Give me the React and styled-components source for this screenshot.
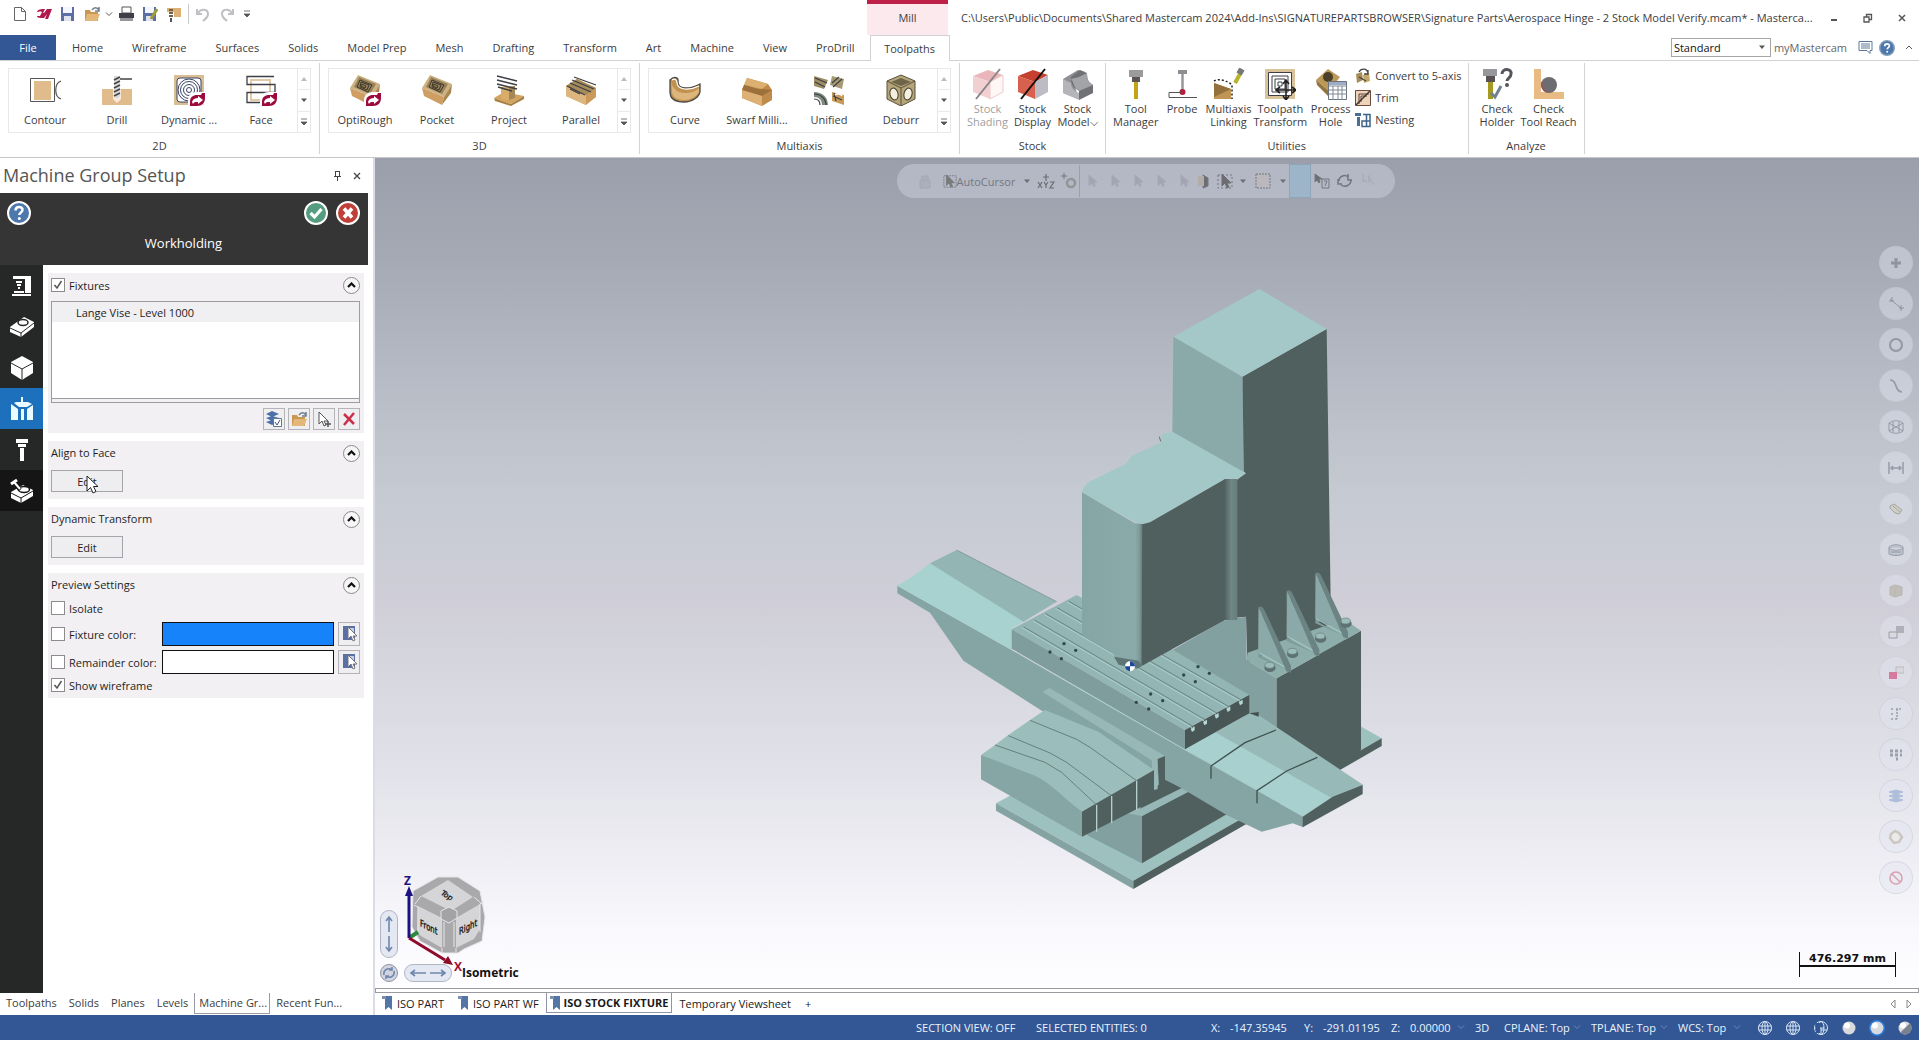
import React, { useState } from "react";
import styled, { createGlobalStyle, css } from "styled-components";

const GlobalStyle = createGlobalStyle`
  * {
    box-sizing: border-box;
  }

  body {
    margin: 0;
    font-family: "Open Sans", "Noto Sans", sans-serif;
    font-size: 11px;
    line-height: 13px;
    color: #3c3c3c;
    background: #fff;
  }

  button, input, select {
    font: inherit;
    color: inherit;
  }

  button {
    padding: 0;
    border: none;
    background: none;
    cursor: pointer;
  }

  h1, h2, h3 {
    margin: 0;
    font-weight: 400;
  }

  svg {
    display: block;
    flex: none;
  }
`;

const AppFrame = styled.div`
  display: flex;
  flex-direction: column;
  min-height: 100vh;
`;

/* ---------- title bar ---------- */

const TopBar = styled.header`
  display: flex;
  align-items: center;
  height: 35px;
`;

const QuickAccess = styled.div`
  display: flex;
  align-items: center;
  align-self: flex-start;
  width: 867px;
  height: 28px;
  padding-left: 8px;
`;

const QuickButton = styled.button`
  display: flex;
  align-items: center;
  justify-content: center;
  width: ${(props) => props.$w || 24}px;
  height: 24px;
`;

const QuickDivider = styled.span`
  width: 1px;
  height: 20px;
  margin: 0 2px;
  background: #c9c9c9;
`;

const ContextTitle = styled.div`
  align-self: stretch;
  display: flex;
  align-items: center;
  justify-content: center;
  width: 81px;
  padding-bottom: 5px;
  border-top: 4px solid #bd2148;
  background: #fce9ee;
`;

const DocTitle = styled.h1`
  flex: 1;
  min-width: 0;
  padding-left: 13px;
  font-size: 11px;
  line-height: 16px;
  white-space: nowrap;
`;

const WindowButtons = styled.div`
  display: flex;
`;

const WindowButton = styled.button`
  display: flex;
  align-items: center;
  justify-content: center;
  width: 34px;
  height: 32px;
`;

/* ---------- ribbon tabs ---------- */

const TabStrip = styled.nav`
  display: flex;
  height: 26px;
  border-bottom: 1px solid #d2d2d6;
`;

const RibbonTab = styled.button`
  height: 26px;
  margin-right: 1px;
  padding: 0 14px;
  line-height: 26px;

  ${(props) =>
    props.$kind === "file" &&
    css`
      width: 56px;
      padding: 0;
      height: 25px;
      margin-right: 2px;
      color: #fff;
      background: #335695;
    `}

  ${(props) =>
    props.$kind === "active" &&
    css`
      width: 80px;
      padding: 0;
      border: 1px solid #d2d2d6;
      border-bottom: none;
      background: #fff;
    `}
`;

const TabTools = styled.div`
  display: flex;
  align-items: center;
  margin-left: auto;
  gap: 2px;
`;

const ModeSelect = styled.select`
  width: 100px;
  height: 19px;
  padding: 0 0 0 2px;
  border: 1px solid #a6a6a6;
  border-radius: 0;
  background: #fff;
  color: #111;
  appearance: none;
`;

const SelectBox = styled.div`
  position: relative;

  svg {
    position: absolute;
    right: 5px;
    top: 7px;
    pointer-events: none;
  }
`;

const AccountLink = styled.a`
  margin: 0 6px 0 1px;
  line-height: 24px;
  color: #666;
  text-decoration: none;
`;

const TabIconButton = styled.button`
  display: flex;
  align-items: center;
  justify-content: center;
  width: 20px;
  height: 22px;
`;

/* ---------- ribbon ---------- */

const RibbonBar = styled.div`
  display: flex;
  height: 97px;
  padding-top: 2px;
  border-bottom: 1px solid #c8c8cc;
`;

const RibbonGroup = styled.section`
  display: flex;
  flex-direction: column;
  height: 91px;
  padding: 5px ${(props) => props.$pad}px 0;
  border-right: 1px solid #d4d4d8;
`;

const GroupTitle = styled.h2`
  margin-top: auto;
  padding-bottom: 1px;
  font-size: 11px;
  line-height: 14px;
  text-align: center;
`;

const GroupBody = styled.div`
  display: flex;
`;

const Gallery = styled.div`
  display: flex;
  height: 65px;
  border: 1px solid #e8e8ea;
`;

const GalleryItem = styled.button`
  display: flex;
  flex-direction: column;
  align-items: center;
  gap: 7px;
  width: 72px;
  padding-top: 5px;
  white-space: nowrap;
`;

const GalleryScroll = styled.div`
  display: flex;
  flex-direction: column;
  width: 13px;
  border-left: 1px solid #e8e8ea;
`;

const ScrollButton = styled.button`
  display: flex;
  align-items: center;
  justify-content: center;
  flex: 1;

  & + & {
    border-top: 1px solid #e8e8ea;
  }
`;

const LargeTool = styled.button`
  display: flex;
  flex-direction: column;
  align-items: center;
  gap: 2px;
  min-width: 45px;
  padding: 0 1px;
  opacity: ${(props) => (props.disabled ? 0.5 : 1)};
`;

const ToolLabel = styled.span`
  white-space: pre;
  text-align: center;
`;

const SmallTools = styled.div`
  display: flex;
  flex-direction: column;
  padding-left: 2px;
`;

const SmallTool = styled.button`
  display: flex;
  align-items: flex-start;
  gap: 4px;
  height: 22px;
  white-space: nowrap;

  span {
    line-height: 16px;
  }
`;

/* ---------- left panel ---------- */

const Workspace = styled.main`
  display: flex;
  flex: 1;
`;

const SidePanel = styled.aside`
  display: flex;
  flex-direction: column;
  width: 375px;
  border-right: 2px solid #dcdce4;
`;

const PanelHeading = styled.div`
  display: flex;
  align-items: center;
  height: 35px;
  padding: 0 7px 0 3px;

  h2 {
    flex: 1;
    padding-bottom: 1px;
    font-size: 18px;
    line-height: 24px;
    color: #555;
  }
`;

const PanelIconButton = styled.button`
  display: flex;
  align-items: center;
  justify-content: center;
  width: 19px;
  height: 20px;
`;

const PanelHeader = styled.div`
  width: 368px;
  height: 72px;
  padding: 8px 8px 0 7px;
  background: #363535;
  color: #fff;

  h3 {
    margin-top: 8px;
    font-size: 13px;
    line-height: 20px;
    text-align: center;
  }
`;

const HeaderButtons = styled.div`
  display: flex;
  gap: 8px;

  button:first-child {
    margin-right: auto;
  }
`;

const PanelBody = styled.div`
  display: flex;
  flex: 1;
`;

const PageRail = styled.nav`
  width: 43px;
  background: #262727;
`;

const RailButton = styled.button`
  display: flex;
  align-items: center;
  justify-content: center;
  width: 43px;
  height: 41px;
  background: ${(props) => props.$bg || "transparent"};
`;

const Sections = styled.div`
  display: flex;
  flex-direction: column;
  flex: 1;
  gap: 8px;
  padding: 8px 9px 0 5px;
  color: #1e1e1e;
`;

const Section = styled.section`
  padding: 3px 4px ${(props) => props.$bottom || 7}px 3px;
  background: #f2f0f2;
`;

const SectionHead = styled.div`
  display: flex;
  align-items: center;
  justify-content: space-between;
  height: 18px;

  h3 {
    font-size: 11px;
    line-height: 18px;
  }
`;

const CheckLabel = styled.label`
  display: flex;
  align-items: center;
  gap: 4px;
  white-space: nowrap;
`;

const CheckBox = styled.input`
  appearance: none;
  width: 14px;
  height: 14px;
  margin: 0;
  border: 1px solid #8c8c8c;
  background: #fff;

  &:checked {
    background: #fff
      url("data:image/svg+xml,%3Csvg xmlns='http://www.w3.org/2000/svg' viewBox='0 0 12 12'%3E%3Cpath d='M2.5 6l2.5 3 4.500-7' fill='none' stroke='%23555' stroke-width='1.500'/%3E%3C/svg%3E");
  }
`;

const CollapseButton = styled.button`
  display: flex;
  align-items: center;
  justify-content: center;
  width: 17px;
  height: 17px;
  border: 1px solid #8b8b8b;
  border-radius: 50%;
  background: #f7f6f7;
`;

const FixtureList = styled.ul`
  height: 98px;
  margin: 7px 0 0;
  padding: 0;
  list-style: none;
  border: 1px solid #9b9ba0;
  background: #fff;

  li {
    height: 20px;
    padding-left: 24px;
    line-height: 21px;
    background: #f0eff1;
  }
`;

const ListFooter = styled.div`
  height: 4px;
  border: 1px solid #9b9ba0;
  border-top: none;
`;

const ListButtons = styled.div`
  display: flex;
  justify-content: flex-end;
  gap: 3px;
  margin-top: 5px;
`;

const SquareButton = styled.button`
  display: flex;
  align-items: center;
  justify-content: center;
  width: 22px;
  height: ${(props) => props.$h || 22}px;
  border: 1px solid #b4b3b8;
  background: #efeef1;
`;

const EditButton = styled.button`
  display: block;
  width: 72px;
  height: 22px;
  margin-top: 8px;
  border: 1px solid #a4a4ab;
  background: #eeedf0;
`;

const EditArea = styled.div`
  position: relative;
`;

const Pointer = styled.svg`
  position: absolute;
  left: 35px;
  top: 5px;
`;

const SettingRow = styled.div`
  display: flex;
  align-items: center;
  height: ${(props) => props.$h || 24}px;
`;

const SettingName = styled.div`
  flex: 1;
`;

const Swatch = styled.button`
  width: 172px;
  height: 24px;
  margin-right: 4px;
  border: 1px solid #111;
  background: ${(props) => props.$color};
`;

/* ---------- viewport ---------- */

const ViewColumn = styled.div`
  display: flex;
  flex-direction: column;
  flex: 1;
  min-width: 0;
`;

const Viewport = styled.div`
  position: relative;
  flex: 1;
  overflow: hidden;
  background: linear-gradient(
    180deg,
    #9a9fab 0%,
    #a4a9b4 12%,
    #b5bac4 26%,
    #c5cad2 40%,
    #cfced8 53%,
    #dddee6 70%,
    #eeedf3 84%,
    #f9f8fc 93%,
    #fefdff 100%
  );
`;

const SelectionBar = styled.div`
  position: absolute;
  left: calc(50% - 250px);
  top: 6px;
  display: flex;
  align-items: center;
  width: 498px;
  height: 34px;
  padding-left: 16px;
  border-radius: 17px;
  background: rgba(214, 218, 230, 0.42);
  color: #5d626c;
`;

const BarButton = styled.button`
  display: flex;
  align-items: center;
  justify-content: center;
  width: ${(props) => props.$w || 23}px;
  height: 34px;
  white-space: nowrap;
  opacity: ${(props) => (props.$dim ? 0.18 : 0.75)};
  ${(props) =>
    props.$on &&
    css`
      border: 1px solid #7899ae;
      background: #8fb4cc;
      opacity: 0.6;
    `}
`;

const BarDivider = styled.span`
  width: 1px;
  height: 32px;
  background: #9a9faa;
`;

const QuickMasks = styled.div`
  position: absolute;
  right: 6px;
  top: 88px;
  display: flex;
  flex-direction: column;
  gap: 8px;
`;

const MaskButton = styled.button`
  display: flex;
  align-items: center;
  justify-content: center;
  width: 34px;
  height: 33px;
  border-radius: 50%;
  border: 1px solid rgba(190, 192, 205, 0.4);
  background: rgba(226, 229, 240, 0.45);
  color: #777d88;

  svg {
    opacity: 0.65;
  }
`;

const ModelDrawing = styled.svg`
  position: absolute;
  left: calc(50% - 267px);
  top: 112px;
`;

const Gizmo = styled.div`
  position: absolute;
  left: 3px;
  bottom: 1px;
`;

const ScaleMark = styled.div`
  position: absolute;
  right: 23px;
  bottom: 11px;
  width: 97px;
  height: 25px;
  border: solid #111;
  border-width: 0 1px;
  font: 700 11px/13px "DejaVu Sans", sans-serif;
  color: #111;
  text-align: center;

  span {
    display: block;
    border-bottom: 2px solid #111;
  }
`;

const SplitBar = styled.div`
  height: 5px;
  border: 1px solid #9a9aa0;
  background: #fff;
`;

/* ---------- bottom tabs and status ---------- */

const BottomTabs = styled.div`
  display: flex;
  height: 22px;
`;

const ManagerTab = styled.button`
  height: 20px;
  padding: 0 6px;
  line-height: 20px;
  white-space: nowrap;
  ${(props) =>
    props.$active &&
    css`
      height: 21px;
      width: 76px;
      padding: 0 4px;
      line-height: 18px;
      border: 1px solid #9b9ba5;
      border-top: none;
    `}
`;

const SheetTab = styled.button`
  display: flex;
  align-items: center;
  gap: 5px;
  height: 20px;
  padding: 0 7px;
  white-space: nowrap;
  color: #1a1a1a;
  ${(props) =>
    props.$active &&
    css`
      gap: 4px;
      padding: 0 3px;
      border: 1px solid #8f93a3;
      border-top: none;
      font-weight: 700;
    `}
`;

const SheetArrows = styled.div`
  display: flex;
  gap: 10px;
  align-items: center;
  margin-left: auto;
  padding-right: 7px;
`;

const StatusBar = styled.footer`
  display: flex;
  align-items: center;
  justify-content: flex-end;
  height: 25px;
  background: #335795;
  color: #eaf3ff;
`;

const StatusCell = styled.div`
  display: flex;
  width: ${(props) => props.$w}px;
  white-space: nowrap;

  b {
    width: 19px;
    font-weight: 400;
  }

  svg {
    margin: 4px 10px 0 auto;
  }
`;

const StatusButton = styled.button`
  display: flex;
  justify-content: center;
  width: 28px;
`;

/* ---------- icons ---------- */

const tan = "#e0bb8b";
const ink = "#3d3f45";

const DropGlyph = ({ color = "#555", open }) => (
  <svg width="8" height="5" viewBox="0 0 8 5">
    {open ? (
      <path d="M1 0.5l3 3 3-3" fill="none" stroke={color} />
    ) : (
      <path d="M1 0.5h6L4 4z" fill={color} />
    )}
  </svg>
);

const Swoosh = () => (
  <g>
    <path d="M15 33v-7c0-5 4-8 9-8h8v8c0 4-3 7-7 7z" fill="#fff" />
    <path d="M17 32v-4c0-5 3-7 7-7h4l1-2h3v5c0 5-3 8-8 8z" fill="#9c0b3c" />
    <path d="M19 28c1-3 3-4 6-4v-2l5 4-5 4v-2c-3 0-4 0-5 2z" fill="#fff" />
  </g>
);

const ContourIcon = () => (
  <svg width="32" height="32" viewBox="0 0 32 32">
    <path d="M5 7h17v19H5z" fill={tan} />
    <path d="M1.500 4.500h24v23h-24z" fill="none" stroke="#555" />
    <path d="M32 7c-7 2-7 16 0 18" fill="none" stroke="#555" strokeWidth="1.200" />
  </svg>
);

const DrillIcon = () => (
  <svg width="32" height="32" viewBox="0 0 32 32">
    <path d="M1 15h30v16H1z" fill={tan} />
    <path d="M12 15h8v10l-4 4-4-4z" fill="#fbeadb" />
    <path d="M13 2h6v20l-3 3-3-3z" fill="#d7d9dc" />
    <path d="M13 6l6-3M13 10l6-3M13 14l6-3M13 18l6-3M13 22l6-3M19 5h12" stroke="#444" strokeWidth="1.600" />
  </svg>
);

const DynamicIcon = () => (
  <svg width="32" height="32" viewBox="0 0 32 32">
    <path d="M1 1h30v30H1z" fill="#d9bd93" />
    <rect x="4" y="4" width="24" height="24" rx="3" fill="#fff" stroke="#3a4468" />
    <g fill="none" stroke="#3a4468">
      <circle cx="16" cy="16" r="2.500" />
      <circle cx="16" cy="16" r="5.500" />
      <circle cx="16" cy="16" r="8.500" />
      <circle cx="16" cy="16" r="11" />
    </g>
    <Swoosh />
  </svg>
);

const FaceIcon = () => (
  <svg width="32" height="32" viewBox="0 0 32 32">
    <path d="M6 6h19v20H6z" fill="none" stroke="#e3c9a6" strokeWidth="2" />
    <path d="M29 2.500H2v8h28v8H2v10h14" fill="none" stroke={ink} strokeWidth="1.300" />
    <Swoosh />
  </svg>
);

const RoughIcon = ({ swoosh }) => (
  <svg width="32" height="32" viewBox="0 0 32 32">
    <path d="M9 1l22 9-8 13L1 14z" fill="#cdb182" />
    <path d="M1 14l22 9-2 8L3 22z" fill="#cf9e63" />
    <path d="M31 10l-8 13-2 8 9-12z" fill="#a98850" />
    <path d="M10 3l17 7-6 10-16-7z" fill="#96815a" />
    <path d="M11 6l12 5-4 7-11-5zM12 8l8 3-2 5-7-3zM13 10l4 2-1 2-4-2z" fill="none" stroke="#3f3828" />
    {swoosh && <Swoosh />}
  </svg>
);

const ProjectIcon = () => (
  <svg width="32" height="32" viewBox="0 0 32 32">
    <path d="M1 24l10-6 20 4-13 8z" fill="#d3a45f" />
    <path d="M1 24l17 6v2L2 27zM18 30l13-8v3l-13 7z" fill="#a98044" />
    <path d="M8 13l14-1v12c-4 3-10 3-14 0z" fill="#d9ae6b" />
    <path d="M16 13l6-1v12l-6 2z" fill="#a48856" />
    <path d="M4 2l20 5M4 6l20 5M4 10l20 5M5 13l14 4" stroke={ink} strokeWidth="1.400" />
  </svg>
);

const ParallelIcon = () => (
  <svg width="32" height="32" viewBox="0 0 32 32">
    <path d="M1 12L12 5l19 9v9l-10 8L1 22z" fill="#cb9a58" />
    <path d="M1 12l20 9v10L1 22z" fill="#dcb67e" />
    <path d="M1 12L12 5l19 9-10 7z" fill="#a68b5b" />
    <path d="M9 3l22 8M7 6l22 9M5 9l21 9M2 12l18 9M5 15l10 5" stroke={ink} strokeWidth="1.300" />
  </svg>
);

const CurveIcon = () => (
  <svg width="32" height="32" viewBox="0 0 32 32">
    <path d="M1 6c4-4 9-3 8 2 0 7 10 8 22 2v7c0 6-8 11-16 11S1 25 1 18z" fill="#c0914f" />
    <path d="M2 7c1 8 7 12 14 12 6 0 11-2 14-5v4c-3 5-9 8-15 8S3 23 3 18z" fill="#dcb67c" />
    <path d="M1 6c4-4 9-3 8 2 0 7 10 8 22 2v7c0 6-8 11-16 11S1 25 1 18z" fill="none" stroke="#4a4a48" strokeWidth="1.300" />
    <path d="M3 6c3-2 5 0 5 3 1 7 12 8 22 3" fill="none" stroke="#fff" strokeWidth="1.200" />
  </svg>
);

const SwarfIcon = () => (
  <svg width="32" height="32" viewBox="0 0 32 32">
    <path d="M6 4l21 6 4 6v10l-10 6L1 24V16z" fill="#c08b4a" />
    <path d="M6 4l21 6-6 5-18-4z" fill="#dcb071" />
    <path d="M3 11c7 1 13 5 18 4l10 1-10 6L1 16z" fill="#9c703b" />
    <path d="M1 16l20 6v10L1 24z" fill="#ddb176" />
  </svg>
);

const UnifiedIcon = () => (
  <svg width="32" height="32" viewBox="0 0 32 32">
    <path d="M1 2l14 4-4 9L1 12z" fill="#9c8d64" />
    <path d="M19 2l12 3-2 10-12-4z" fill="#a69a72" />
    <path d="M1 18c8 0 14 5 14 13H9c0-5-3-8-8-8z" fill="#7f8a7e" />
    <path d="M19 18l12 3v10l-12-4z" fill="#c99b59" />
    <path d="M2 4l12 5M2 8l10 5M20 13l9-8M19 9l7-6M1 20c7 0 12 5 12 11M1 25c4 0 6 2 6 6M20 22l9 4M21 19l2 8" fill="none" stroke={ink} strokeWidth="1.200" />
    <path d="M22 21c2-2 6-1 7 1" fill="none" stroke="#fff" strokeWidth="1.500" />
  </svg>
);

const DeburrIcon = () => (
  <svg width="32" height="32" viewBox="0 0 32 32">
    <path d="M16 1l14 6v18l-14 7L2 25V7z" fill="#b5a67a" stroke="#58513d" />
    <path d="M16 4l10 4-10 4L6 8z" fill="#6f664a" />
    <path d="M2 7l14 7 14-7M16 14v18" fill="none" stroke="#58513d" />
    <ellipse cx="9" cy="20" rx="4" ry="6" fill="#f5efe0" stroke="#403b2c" transform="rotate(-15 9 20)" />
    <ellipse cx="23" cy="20" rx="4" ry="6" fill="#f5efe0" stroke="#403b2c" transform="rotate(15 23 20)" />
  </svg>
);

const StockCubeIcon = ({ ghost }) => (
  <svg width="32" height="32" viewBox="0 0 32 32">
    <path d="M1 8L16 2l15 5-13 7z" fill={ghost ? "#d9707a" : "#c5402f"} />
    <path d="M1 8l17 6v17L1 24z" fill={ghost ? "#e7a1a5" : "#d8604e"} />
    <path d="M31 7L18 14v17l13-7z" fill={ghost ? "#fff0ec" : "#bdbcc4"} stroke={ghost ? "#df9a98" : "none"} />
    <path d="M28 1L4 31" stroke="#111" strokeWidth="2" />
  </svg>
);

const StockModelIcon = () => (
  <svg width="32" height="32" viewBox="0 0 32 32">
    <path d="M1 11L16 2l7 2-12 9 3 9 3 9L1 25z" fill="#8f9093" />
    <path d="M9 9l9-7 7 3c0 8 2 9 6 12v8l-14 7v-9c-6-4-8-6-8-14z" fill="#707174" />
    <path d="M17 9l8-4c0 8 2 9 6 12l-14 6c-6-4-5-9-8-12z" fill="#a3a4a8" />
    <path d="M1 11l8 4c0 6 4 8 8 10v7L1 25z" fill="#b5b5b9" />
  </svg>
);

const ToolManagerIcon = () => (
  <svg width="32" height="32" viewBox="0 0 32 32">
    <path d="M9 2h14v7H9z" fill="#9b9b9e" />
    <path d="M12 9h8v5h-8z" fill="#5c5453" />
    <path d="M14 14h4v17h-4z" fill="#c2a416" />
  </svg>
);

const ProbeIcon = () => (
  <svg width="32" height="32" viewBox="0 0 32 32">
    <path d="M12 2h9v4h-9z" fill="#8d8d92" />
    <path d="M16.500 6v16" stroke="#96969b" strokeWidth="2.500" />
    <circle cx="16.500" cy="24" r="3" fill="#b0213f" />
    <path d="M15 24.500H3v5h28" fill="none" stroke="#555" />
  </svg>
);

const LinkingIcon = () => (
  <svg width="32" height="32" viewBox="0 0 32 32">
    <path d="M1 15l17 6v10H1z" fill="#bf9455" />
    <path d="M1 15l17 6-17 8z" fill="#94703c" />
    <path d="M1 13c5-3 14 0 18 4v14" fill="none" stroke="#222" strokeDasharray="2 2" strokeWidth="1.500" />
    <path d="M22 15l5-9" stroke="#b9b427" strokeWidth="4" />
    <path d="M26 6l3-5" stroke="#777" strokeWidth="6" />
  </svg>
);

const TransformIcon = () => (
  <svg width="32" height="32" viewBox="0 0 32 32">
    <path d="M1 1h30v30H1z" fill="#d9c39d" />
    <path d="M4.500 4.500h23v23h-23z" fill="#fff" stroke={ink} />
    <path d="M8 8h16v16H8zM11 11h10v10H11zM14 14h4v4h-4z" fill="none" stroke={ink} />
    <path d="M22 13v18M13 22h18M19 16l3-4 3 4M19 28l3 4 3-4M16 19l-4 3 4 3M28 19l4 3-4 3" fill="none" stroke="#222" strokeWidth="1.600" />
  </svg>
);

const ProcessHoleIcon = () => (
  <svg width="32" height="32" viewBox="0 0 32 32">
    <path d="M13 1l12 8-11 14L1 12z" fill="#bd9959" />
    <path d="M1 12l13 11-1 5L2 17z" fill="#93743e" />
    <circle cx="13" cy="9" r="5" fill="#4c3f27" />
    <path d="M13.500 13.500h18v18h-18z" fill="#fff" stroke="#69737f" />
    <path d="M14 18h18M14 22h18M14 26h18M18 18v14M23 18v14M27 18v14" stroke="#7f8995" />
    <path d="M14 14h17v3H14z" fill="#9faec4" />
  </svg>
);

const HolderIcon = () => (
  <svg width="32" height="32" viewBox="0 0 32 32">
    <path d="M2 1h14v7H2z" fill="#98989c" />
    <path d="M5 8h9v6H5z" fill="#5a5252" />
    <path d="M7 14h5v17H7z" fill="#a59a1f" />
    <path d="M10 25l4 4 6-11" fill="none" stroke="#6f8490" strokeWidth="3" />
    <path d="M21 6c0-6 10-6 9 0 0 4-4 4-4 7" fill="none" stroke="#55575d" strokeWidth="3" />
    <circle cx="26" cy="17" r="2" fill="#55575d" />
  </svg>
);

const ReachIcon = () => (
  <svg width="32" height="32" viewBox="0 0 32 32">
    <path d="M1 1h7v23h23v7H1z" fill="#e8bb84" />
    <circle cx="16" cy="17" r="8" fill="#6d6c70" />
    <path d="M9 14a8 8 0 0 0 5 10" fill="none" stroke="#a04d4d" strokeWidth="1.200" />
  </svg>
);

const FiveAxisIcon = () => (
  <svg width="16" height="16" viewBox="0 0 16 16">
    <path d="M1 6l6-2 1 8-6 3z" fill="#a58d57" />
    <path d="M8 7l6-2 1 8-6 2z" fill="#c3a767" />
    <path d="M4 4c2-4 8-4 9 1M13 2v4H9M4 9l7 4" fill="none" stroke="#444" strokeWidth="1.300" />
  </svg>
);

const TrimIcon = () => (
  <svg width="16" height="16" viewBox="0 0 16 16">
    <path d="M0.500 0.500h15v15h-15z" fill="#ecd3ba" stroke="#6e4b3d" />
    <path d="M4 14V4h10M6 12V6h6" fill="none" stroke="#5c4438" />
    <path d="M1 15L15 1" stroke="#3d3532" strokeWidth="1.500" />
  </svg>
);

const NestingIcon = () => (
  <svg width="16" height="16" viewBox="0 0 16 16">
    <path d="M0 1h6v3H0zM2 5h3v9H2z" fill="#4a6f94" />
    <path d="M8 2.500h7v12H7V9h8M11.500 2.500v12" fill="none" stroke="#3f648a" strokeWidth="1.500" />
  </svg>
);

const HelpIcon = ({ size = 24 }) => (
  <svg width={size} height={size} viewBox="0 0 24 24">
    <circle cx="12" cy="12" r="11" fill="#4d78ad" stroke={size > 20 ? "#fff" : "#8aa0bb"} strokeWidth="2" />
    <path d="M8.500 9.500c0-5 7.500-4.500 7-.5-.2 2.500-3.200 2.500-3.200 5" fill="none" stroke="#fff" strokeWidth="2.500" />
    <circle cx="12.300" cy="17.500" r="1.500" fill="#fff" />
  </svg>
);

const OkIcon = () => (
  <svg width="24" height="24" viewBox="0 0 24 24">
    <circle cx="12" cy="12" r="11" fill="#559c80" stroke="#fff" strokeWidth="2" />
    <path d="M6.500 12l4 4 7-8" fill="none" stroke="#fff" strokeWidth="3.200" />
  </svg>
);

const CancelIcon = () => (
  <svg width="24" height="24" viewBox="0 0 24 24">
    <circle cx="12" cy="12" r="11" fill="#bf4038" stroke="#fff" strokeWidth="2" />
    <path d="M8 7.500l8 9M16 7.500l-8 9" stroke="#fff" strokeWidth="3.600" />
  </svg>
);

const CollapseGlyph = () => (
  <svg width="9" height="7" viewBox="0 0 9 7">
    <path d="M1 5l3.500-3.500L8 5" fill="none" stroke="#111" strokeWidth="2.200" />
  </svg>
);

const BookmarkIcon = () => (
  <svg width="10" height="16" viewBox="0 0 10 16">
    <path d="M0 1h10v14l-3.500-3L3 15V4H0z" fill="#5476a6" />
    <path d="M0 1h4v3H0z" fill="#7c90ad" />
  </svg>
);

const CursorShape = ({ x = 0, y = 0, fill = "#fff", stroke = "#444" }) => (
  <path d={`M${x} ${y}v12l3-3 2 5 2-1-2-4h4z`} fill={fill} stroke={stroke} />
);

const NewIcon = () => (
  <svg width="14" height="16" viewBox="0 0 14 16">
    <path d="M1.500 1.500h7l4 4v9h-11zM8.500 1.500v4h4" fill="#fff" stroke="#666" />
  </svg>
);

const BrandIcon = () => (
  <svg width="17" height="14" viewBox="0 0 17 14">
    <path d="M1 5c1-3 4-3 8-3L7 6h1l3-4h5l-4 10H9l2-5-3 4H5c-3 0-4-1-4-2h3l2-4c-2-1-3 0-5 0z" fill="#b0194a" />
  </svg>
);

const SaveIcon = ({ edit }) => (
  <svg width="16" height="16" viewBox="0 0 16 16">
    <path d="M1 1h13v14H1z" fill="#5b6fa5" />
    <path d="M3 1h9v6H3z" fill="#f4f6fb" />
    <path d="M4 10h7v5H4z" fill="#dfe3ee" />
    {edit && <path d="M15 3l-6 10" stroke="#a39a37" strokeWidth="3" />}
  </svg>
);

const OpenIcon = () => (
  <svg width="17" height="16" viewBox="0 0 17 16">
    <path d="M1 4h5l1 2h7v9H1z" fill="#c99850" />
    <path d="M3 8h13l-3 7H1z" fill="#e3b777" />
    <path d="M8 4c2-3 5-3 7 0M15 1v4h-4" fill="none" stroke="#6d7d8d" strokeWidth="1.500" />
  </svg>
);

const PrintIcon = () => (
  <svg width="17" height="16" viewBox="0 0 17 16">
    <path d="M4 1h9v6H4z" fill="#fff" stroke="#555" />
    <path d="M1 7h15v5H1z" fill="#3e4046" />
    <path d="M2 12h13v3H2z" fill="#95979c" />
  </svg>
);

const PostIcon = () => (
  <svg width="16" height="16" viewBox="0 0 16 16">
    <path d="M1 2h14v9H8V6H1z" fill="#ddb173" />
    <path d="M5 3v9" stroke="#6c6250" strokeWidth="4" strokeDasharray="2 1" />
    <path d="M5 12v4" stroke="#555" strokeWidth="2" />
  </svg>
);

const UndoIcon = ({ flip }) => (
  <svg width="14" height="15" viewBox="0 0 14 15">
    <g transform={flip ? "matrix(-1 0 0 1 14 0)" : undefined} fill="none" stroke="#bfc0c6" strokeWidth="2">
      <path d="M2 6c3-5 10-4 10 1 0 4-3 5-5 7M1 2v5h5" />
    </g>
  </svg>
);

const OverflowGlyph = ({ color = "#555" }) => (
  <svg width="8" height="8" viewBox="0 0 8 8">
    <path d="M1 1h6M1 4h6L4 7z" fill={color} stroke={color} strokeWidth="0.800" />
  </svg>
);

/* white pictograms of the setup page rail */

const MachinePageIcon = () => (
  <svg width="24" height="24" viewBox="0 0 24 24" fill="#fff">
    <path d="M3 2h18v3H3zM15 5h6v14h-6zM4 17h10v2H4zM2 20h19v2H2z" />
    <path d="M6 7h6v2H6zM7 10h4v2H7zM8 13h2v2H8z" />
  </svg>
);

const PartPageIcon = () => (
  <svg width="26" height="24" viewBox="0 0 26 24">
    <path d="M1 12L15 2l10 5v5L12 22 1 17z" fill="#fff" />
    <path d="M1 13l11 5L25 8M12 18v4" fill="none" stroke="#262727" />
    <ellipse cx="14" cy="7.500" rx="5" ry="3" fill="#fff" stroke="#262727" strokeWidth="1.500" />
  </svg>
);

const StockPageIcon = () => (
  <svg width="24" height="26" viewBox="0 0 24 26">
    <path d="M12 1l11 6v11l-11 7-11-7V7z" fill="#fff" />
    <path d="M1 8l11 6 11-6M12 14v11" fill="none" stroke="#262727" />
  </svg>
);

const FixturePageIcon = () => (
  <svg width="26" height="26" viewBox="0 0 26 26" fill="#e9fbff">
    <path d="M2 8l7 5v11H2zM24 9v15h-6V13z" />
    <path d="M7 6h12l4 2-5 3h-8L5 7zM12 1h2v6h-2zM12 13h3v11h-3z" />
  </svg>
);

const ToolPageIcon = () => (
  <svg width="20" height="24" viewBox="0 0 20 24" fill="#fff">
    <path d="M4 1h12v4H4zM6 6h8v3H6zM8 10h4v13H8z" />
  </svg>
);

const SimPageIcon = () => (
  <svg width="26" height="26" viewBox="0 0 26 26">
    <path d="M2 14l12-7 10 5v6l-12 7-10-5z" fill="#fff" />
    <path d="M2 15l10 5 12-7M12 20v5" fill="none" stroke="#151515" />
    <ellipse cx="15" cy="11.500" rx="5.500" ry="3" fill="#fff" stroke="#151515" strokeWidth="1.500" />
    <path d="M5 4l6 8" stroke="#151515" strokeWidth="4" />
    <path d="M5 4l6 7" stroke="#fff" strokeWidth="2" />
    <path d="M2 6l6-4" stroke="#fff" strokeWidth="3" />
  </svg>
);

const PickIcon = () => (
  <svg width="16" height="18" viewBox="0 0 16 18">
    <path d="M2 1h12v14H2z" fill="#5a6fa5" />
    <path d="M9 3h4v8H9z" fill="#c5cde0" />
    <CursorShape x={7} y={2} stroke="#777" />
  </svg>
);

const galleries = [
  {
    title: "2D",
    items: [
      ["Contour", <ContourIcon />],
      ["Drill", <DrillIcon />],
      ["Dynamic ...", <DynamicIcon />],
      ["Face", <FaceIcon />],
    ],
  },
  {
    title: "3D",
    items: [
      ["OptiRough", <RoughIcon swoosh />],
      ["Pocket", <RoughIcon />],
      ["Project", <ProjectIcon />],
      ["Parallel", <ParallelIcon />],
    ],
  },
  {
    title: "Multiaxis",
    items: [
      ["Curve", <CurveIcon />],
      ["Swarf Milli...", <SwarfIcon />],
      ["Unified", <UnifiedIcon />],
      ["Deburr", <DeburrIcon />],
    ],
  },
];

const menuTabs = [
  "Home", "Wireframe", "Surfaces", "Solids", "Model Prep", "Mesh", "Drafting",
  "Transform", "Art", "Machine", "View", "ProDrill",
];

const maskIcons = [
  <path d="M8 3v10M3 8h10" strokeWidth="3" />,
  <path d="M2 3l12 10M1 5h5M4 1v5M11 12h5M13 9v6" />,
  <circle cx="8" cy="8" r="6" strokeWidth="2" />,
  <path d="M2 2c8 0 4 12 12 12" strokeWidth="1.600" />,
  <path d="M1 4c4-3 10-3 14 0v8c-4 3-10 3-14 0zM1 4l14 8M1 12l14-8M5 3v10M11 3v10" />,
  <path d="M1 2v12M15 2v12M3 8h10M5 6L3 8l2 2M11 6l2 2-2 2" strokeWidth="1.500" />,
  <path d="M2 5l4-2 8 6-3 4-4-1-5-5zM5 5l7 6" stroke="#8c897c" fill="#cfcdbb" />,
  <path d="M1 5c4-3 10-3 14 0v7c-4 2-10 2-14 0zM1 6c4 3 10 3 14 0M3 10h10" fill="#b6bac6" />,
  <path d="M2 4l5-2 7 2v8l-7 2-5-2zM7 5v9" fill="#b5b0a2" stroke="#aba698" />,
  <g><path d="M8 2h8v7H8z" fill="#9a9ba5" stroke="none" /><path d="M1 8h8v6H1z" fill="#ded7d9" /></g>,
  <g><path d="M8 2h8v6H8z" fill="#d9d5d9" stroke="#aaa" /><path d="M1 7h8v7H1z" fill="#d4467a" stroke="none" /></g>,
  <path d="M3 3h3M3 8h3M3 13h3M8 3h5M9 3v10M7 13h2" strokeWidth="1.500" strokeDasharray="2 1" />,
  <path d="M2 4h12M2 8h12M8 12h2" strokeWidth="3" strokeDasharray="3 2" />,
  <path d="M1 4l7-2 7 2-7 2zM1 8l7-2 7 2-7 2zM1 12l7-2 7 2-7 2z" fill="#92a8cf" stroke="#92a8cf" />,
  <path d="M3 5l4-3 4 2 3 4-3 5-5 1-4-5z" fill="#efece6" stroke="#bdb5aa" strokeWidth="2.500" />,
  <g stroke="#cf7d8c" strokeWidth="1.600"><circle cx="8" cy="8" r="6" /><path d="M4 4l8 8" /></g>,
];

const Gusset = ({ x, y }) => (
  <g transform={`translate(${x} ${y})`}>
    <path d="M0 0l12 8v140l74 40-12 -6L0 150z" fill="#7d9a99" />
    <path d="M2 2L82 176 0 134z" fill="#8aa9a8" />
    <path d="M0 0c8-6 14 0 18 8l80 168v20l-14-4L8 14z" fill="#6b8382" />
    <path d="M2 136l76 42" stroke="#a9cccb" strokeWidth="3" />
  </g>
);

const MachineModel = () => (
  <ModelDrawing width="520" height="640" viewBox="0 0 1560 1920" role="img" aria-label="Machine model">
    <defs>
      <linearGradient id="headSide">
        <stop offset="0" stopColor="#86a6a5" />
        <stop offset="0.850" stopColor="#8aaaa9" />
        <stop offset="0.920" stopColor="#7e9b9a" />
        <stop offset="1" stopColor="#536564" />
      </linearGradient>
      <linearGradient id="groove">
        <stop offset="0" stopColor="#536463" />
        <stop offset="0.500" stopColor="#6f8785" />
        <stop offset="1" stopColor="#677e7c" />
      </linearGradient>
    </defs>

    {/* base plate and pedestal */}
    <g transform="translate(0 810)">
      <path d="M348 790L400 762 1440 558l65 37-745 427z" fill="#9dc1bf" />
      <path d="M348 790l412 232v25L348 812z" fill="#84a3a2" />
      <path d="M760 1022l745-427v23l-745 429z" fill="#50605f" />
      <path d="M600 700l186 125v145L616 878z" fill="#81a09f" />
      <path d="M620 885l166 85-10-140-120 25z" fill="#81a09f" />
      <path d="M786 828l140-75 240 70-126 0-254 147z" fill="#50605f" />
      <path d="M740 820l170-88 26 18-150 78z" fill="#96b7b5" />
      <path d="M780 806l40-60 40-30 50 26z" fill="#50605f" />
    </g>

    {/* column */}
    <path d="M1087 320l253-143 12 820 60 150-310 30-4-137-40 4V640l39-30-10-10z" fill="#50605f" />
    <path d="M880 200L1138 57l202 120-253 143z" fill="#a3c8c7" />
    <path d="M880 200l207 120 5 290-215-123z" fill="#8aaaa9" />

    {/* column foot */}
    <g transform="translate(0 810)">
      <path d="M860 340l170-98 68-12 2 130 90 55v160L1000 480z" fill="#82a09f" />
      <path d="M1190 415l253-143v358l-63 58-190-110z" fill="#50605f" />
      <path d="M1100 360l90 55 253-143-50-34-290 100z" fill="#8eaeac" />
      <Gusset x={1306} y={100} />
      <Gusset x={1220} y={153} />
      <Gusset x={1135} y={202} />
      {[[1170, 380], [1238, 338], [1322, 292], [1398, 247]].map(([x, y]) => (
        <g key={x}>
          <ellipse cx={x} cy={y + 4} rx="17" ry="12" fill="#5d7271" />
          <ellipse cx={x - 1} cy={y - 4} rx="14" ry="9" fill="#9bbcba" stroke="#667d7c" strokeWidth="2" />
        </g>
      ))}
    </g>

    {/* saddle, table and way covers */}
    <g transform="translate(0 810)">
      <path d="M52 137l343 193 520 300 355 200v32l-32-12-93 25-105-50-135-80-50-25-80-60-285-145-240-153-100-144-98-58z" fill="#85a5a4" />
      <path d="M52 137l43-25 55-42 300 165-55 30v65z" fill="#a8d2d0" />
      <path d="M150 70l80-40 135 70 165 85-100 60z" fill="#93b5b4" />
      <path d="M230 30l135 70 165 85" fill="none" stroke="#718a8a" strokeWidth="2" />
      <path d="M52 137l343 193v-8L52 133zM395 330l520 300 355 200v-6L915 624z" fill="#a9d1cf" />
      <path d="M915 628l193-108 27 5 315 210-180 95z" fill="#97b9b7" />
      <path d="M915 628l85-54 370 208-100 48z" fill="#a7d0ce" />
      <path d="M1268 830l90-60 90-35v27l-180 100z" fill="#50605f" />
      <path d="M993 716v-38l102-70 93-38M1131 790v-38l89-59 92-41" fill="none" stroke="#3f5150" strokeWidth="4" />
      <path d="M1108 520l28-4v14z" fill="#425150" />

      <path d="M395 268l195-103 290 165 228 135-193 105z" fill="#93b5b4" />
      <path d="M395 268l520 302v58L395 326z" fill="#7f9d9c" />
      <path d="M915 570l193-105v55l-193 108z" fill="#485756" />
      {[[430, 260, 940, 560], [463, 240, 977, 540], [497, 221, 1012, 520], [531, 203, 1047, 500], [565, 183, 1084, 480]].map(
        ([x1, y1, x2, y2]) => (
          <g key={x1}>
            <path d={`M${x1} ${y1}L${x2} ${y2}`} stroke="#6b8584" strokeWidth="3" />
            <path d={`M${x1 - 4} ${y1 + 3}L${x2 - 4} ${y2 + 3}`} stroke="#abd0ce" strokeWidth="3" />
            <path d={`M${x2 - 8} ${y2 + 6}l12-7v12l-8 5z`} fill="#b6d5d4" />
          </g>
        )
      )}
      {[[552, 311], [587, 331], [510, 336], [544, 356], [954, 380], [988, 400], [911, 405], [946, 425], [812, 462], [848, 482], [769, 487], [806, 507]].map(
        ([x, y]) => (
          <circle key={x} cx={x} cy={y} r="5" fill="#33484d" />
        )
      )}

      <path d="M488 456l20-12 347 204-22 9v98l-14-8-4-86z" fill="#97b8b7" />
      <path d="M833 657l22-9v84l-18 23z" fill="#4f605f" />
      <path d="M855 720l40 20-30 20-30 0z" fill="#50605f" />

      <path d="M303 645l42-30 40-30 65-45 45-30 160 65 167 115-216 125-140-90z" fill="#9bbebc" />
      <path d="M303 645l157 60c50 20 90 70 146 110v75L303 718z" fill="#86a6a5" />
      <path d="M606 815l216-125v60l60-14-50 40-226 114z" fill="#50605f" />
      <path d="M345 615l150 52 50 30 105 98M385 587l125 52 50 28 135 101M450 541l140 57 40 24 140 100" fill="none" stroke="#687f7e" strokeWidth="3" />
      <path d="M650 795v80M695 768v82M770 722v88" stroke="#b5cfcd" strokeWidth="4" />
    </g>

    {/* spindle head */}
    <path d="M606 667c4-18 16-30 34-38l98-48 16-22 88-42 4-26 34-4 218 123-26 17h-37L810 757c-14 8-30 8-45 0z" fill="#a3c8c7" />
    <path d="M606 667l159 93 28 3v420l-30 5-43-5-20-32-94-56z" fill="url(#headSide)" />
    <path d="M787 763l23-6 225-130v423l-250 138z" fill="#50605f" />
    <path d="M1035 627h37v423h-37z" fill="url(#groove)" />
    <path d="M702 1160l14 24 56 12 14-8-10-16z" fill="#5d7675" />
    <circle cx="750" cy="1189" r="15" fill="#fff" />
    <path d="M750 1189v-15a15 15 0 0 1 15 15zM750 1189v15a15 15 0 0 1-15-15z" fill="#1d479b" />
    <path d="M838 500l4 14" stroke="#60706f" strokeWidth="3" />
  </ModelDrawing>
);

const ViewGizmo = () => (
  <Gizmo>
    <svg width="150" height="116" viewBox="378 871 150 116" role="img" aria-label="View orientation">
      <path d="M438 877l20 0 22 14 5 26-3 24-18 8-6 4h-16l-22-12-8-14 1-36z" fill="#a9a9ab" stroke="#e6e6ea" />
      <path d="M448 880l25 17-22 14-30-15z" fill="#d5d5d7" />
      <path d="M418 906l24 12v30l-21-12-4-4z" fill="#d5d5d7" />
      <path d="M456 918l24-14v25l-6 10-18 9z" fill="#d5d5d7" />
      <path d="M441 911l8-4 8 4v7l-8 5-8-4z" fill="#a3a3a5" stroke="#e6e6ea" />
      <path d="M414 905l4 2v27M484 902l-4 2v28M421 896l-6 8M474 897l8 7M442 948v5M456 948v4M444 922v25M454 922v25" fill="none" stroke="#e6e6ea" />
      <g fontFamily="DejaVu Sans, sans-serif" fontSize="8" fill="#111" stroke="#111" strokeWidth="0.300">
        <text transform="matrix(0.800 0.500 -0.600 0.700 440 894)">Top</text>
        <text transform="matrix(0.860 0.440 0 1.200 420 926)">Front</text>
        <text transform="matrix(0.860 -0.440 0 1.200 459 935)">Right</text>
      </g>
      <path d="M409 938l9-6" stroke="#2c8a3c" strokeWidth="4" />
      <path d="M409 938v-44" stroke="#1c1280" strokeWidth="3" />
      <path d="M409 886l-4 10h8z" fill="#1c1280" />
      <path d="M409 938l36 22" stroke="#8e0b2b" strokeWidth="3" />
      <path d="M453 965l-10-2 5-7z" fill="#8e0b2b" />
      <g fontFamily="Open Sans, sans-serif" fontWeight="700" fontSize="12">
        <text x="404" y="885" fill="#1c1280">Z</text>
        <text x="454" y="971" fill="#a30d33">X</text>
        <text x="462" y="977" fill="#111">Isometric</text>
      </g>
      <g fill="#e4e8f3" stroke="#b0b5c4">
        <rect x="380.500" y="910.500" width="17" height="47" rx="8.500" />
        <rect x="404.500" y="964.500" width="47" height="17" rx="8.500" />
        <circle cx="389" cy="973" r="8.500" fill="#d2d5e0" stroke="#8e93a3" />
      </g>
      <g fill="none" stroke="#6f86ab" strokeWidth="1.600">
        <path d="M389 932v-14M386 921l3-4 3 4M389 936v14M386 947l3 4 3-4" />
        <path d="M426 973h-14M415 970l-4 3 4 3M430 973h14M441 970l4 3-4 3" />
        <path d="M384 975c-1-5 4-8 8-5M394 971c1 5-4 8-8 5M392 967v3h-3M386 979v-3h3" />
      </g>
    </svg>
  </Gizmo>
);

const Collapse = ({ name }) => (
  <CollapseButton aria-label={`Collapse ${name}`}>
    <CollapseGlyph />
  </CollapseButton>
);

const ColorRow = ({ label, color }) => (
  <SettingRow>
    <SettingName>
      <CheckLabel>
        <CheckBox type="checkbox" />
        {label}
      </CheckLabel>
    </SettingName>
    <Swatch $color={color} aria-label={label} />
    <SquareButton $h={24} aria-label="Pick color">
      <PickIcon />
    </SquareButton>
  </SettingRow>
);

const MaskedIcon = ({ children, size = 16 }) => (
  <svg width={size} height={size} viewBox="0 0 16 16" fill="none" stroke="currentColor">
    {children}
  </svg>
);

const Ribbon = () => (
  <RibbonBar>
    {galleries.map((group) => (
      <RibbonGroup key={group.title} $pad={8}>
        <Gallery>
          {group.items.map(([label, icon]) => (
            <GalleryItem key={label}>
              {icon}
              {label}
            </GalleryItem>
          ))}
          <GalleryScroll>
            <ScrollButton aria-label="Scroll up">
              <svg width="6" height="4" viewBox="0 0 6 4"><path d="M0 4h6L3 0z" fill="#bbb" /></svg>
            </ScrollButton>
            <ScrollButton aria-label="Scroll down">
              <DropGlyph />
            </ScrollButton>
            <ScrollButton aria-label="More">
              <OverflowGlyph />
            </ScrollButton>
          </GalleryScroll>
        </Gallery>
        <GroupTitle>{group.title}</GroupTitle>
      </RibbonGroup>
    ))}

    <RibbonGroup $pad={5}>
      <GroupBody>
        <LargeTool disabled>
          <StockCubeIcon ghost />
          <ToolLabel>{"Stock\nShading"}</ToolLabel>
        </LargeTool>
        <LargeTool>
          <StockCubeIcon />
          <ToolLabel>{"Stock\nDisplay"}</ToolLabel>
        </LargeTool>
        <LargeTool>
          <StockModelIcon />
          <ToolLabel>{"Stock\nModel⌵"}</ToolLabel>
        </LargeTool>
      </GroupBody>
      <GroupTitle>Stock</GroupTitle>
    </RibbonGroup>

    <RibbonGroup $pad={6}>
      <GroupBody>
        <LargeTool>
          <ToolManagerIcon />
          <ToolLabel>{"Tool\nManager"}</ToolLabel>
        </LargeTool>
        <LargeTool>
          <ProbeIcon />
          <ToolLabel>Probe</ToolLabel>
        </LargeTool>
        <LargeTool>
          <LinkingIcon />
          <ToolLabel>{"Multiaxis\nLinking"}</ToolLabel>
        </LargeTool>
        <LargeTool>
          <TransformIcon />
          <ToolLabel>{"Toolpath\nTransform"}</ToolLabel>
        </LargeTool>
        <LargeTool>
          <ProcessHoleIcon />
          <ToolLabel>{"Process\nHole"}</ToolLabel>
        </LargeTool>
        <SmallTools>
          <SmallTool><FiveAxisIcon /><span>Convert to 5-axis</span></SmallTool>
          <SmallTool><TrimIcon /><span>Trim</span></SmallTool>
          <SmallTool><NestingIcon /><span>Nesting</span></SmallTool>
        </SmallTools>
      </GroupBody>
      <GroupTitle>Utilities</GroupTitle>
    </RibbonGroup>

    <RibbonGroup $pad={6}>
      <GroupBody>
        <LargeTool>
          <HolderIcon />
          <ToolLabel>{"Check\nHolder"}</ToolLabel>
        </LargeTool>
        <LargeTool>
          <ReachIcon />
          <ToolLabel>{"Check\nTool Reach"}</ToolLabel>
        </LargeTool>
      </GroupBody>
      <GroupTitle>Analyze</GroupTitle>
    </RibbonGroup>
  </RibbonBar>
);

const SetupPanel = () => {
  const [fixtures, setFixtures] = useState(true);
  const [wireframe, setWireframe] = useState(true);

  return (
    <SidePanel>
      <PanelHeading>
        <h2>Machine Group Setup</h2>
        <PanelIconButton aria-label="Pin">
          <svg width="9" height="11" viewBox="0 0 9 11">
            <path d="M2.500 1v5M6.500 1v5M2 1.500h5M1 6.500h7M4.500 7v4" fill="none" stroke="#444" />
          </svg>
        </PanelIconButton>
        <PanelIconButton aria-label="Close panel">
          <svg width="8" height="8" viewBox="0 0 8 8">
            <path d="M1 1l6 6M7 1L1 7" stroke="#444" strokeWidth="1.300" />
          </svg>
        </PanelIconButton>
      </PanelHeading>

      <PanelHeader>
        <HeaderButtons>
          <button aria-label="Help"><HelpIcon /></button>
          <button aria-label="OK"><OkIcon /></button>
          <button aria-label="Cancel"><CancelIcon /></button>
        </HeaderButtons>
        <h3>Workholding</h3>
      </PanelHeader>

      <PanelBody>
        <PageRail>
          <RailButton aria-label="Machine"><MachinePageIcon /></RailButton>
          <RailButton aria-label="Part"><PartPageIcon /></RailButton>
          <RailButton aria-label="Stock"><StockPageIcon /></RailButton>
          <RailButton aria-label="Workholding page" $bg="#1d70bc"><FixturePageIcon /></RailButton>
          <RailButton aria-label="Tools"><ToolPageIcon /></RailButton>
          <RailButton aria-label="Simulation" $bg="#151515"><SimPageIcon /></RailButton>
        </PageRail>

        <Sections>
          <Section $bottom={3}>
            <SectionHead>
              <CheckLabel>
                <CheckBox
                  type="checkbox"
                  checked={fixtures}
                  onChange={() => setFixtures(!fixtures)}
                />
                Fixtures
              </CheckLabel>
              <Collapse name="Fixtures" />
            </SectionHead>
            <FixtureList>
              <li>Lange Vise - Level 1000</li>
            </FixtureList>
            <ListFooter />
            <ListButtons>
              <SquareButton aria-label="Add from level">
                <svg width="18" height="18" viewBox="0 0 18 18">
                  <path d="M1 4l6-3 7 3-7 3zM1 8l6-2 7 2-7 3zM1 12l6-2 7 2-7 3z" fill="#4d6fa8" />
                  <path d="M8.500 8.500h8v8h-8z" fill="#fff" stroke="#5d7897" />
                  <path d="M10 12l2 3 3-5" fill="none" stroke="#3c5d80" />
                </svg>
              </SquareButton>
              <SquareButton aria-label="Add from file"><OpenIcon /></SquareButton>
              <SquareButton aria-label="Add from selection">
                <svg width="16" height="18" viewBox="0 0 16 18">
                  <CursorShape x={3} y={2} stroke="#555" />
                  <path d="M12 11v6M9 14h6" stroke="#555" strokeWidth="1.500" />
                </svg>
              </SquareButton>
              <SquareButton aria-label="Delete">
                <svg width="14" height="14" viewBox="0 0 14 14">
                  <path d="M2 2l10 10M12 1L2 13" stroke="#cb3048" strokeWidth="2.500" />
                </svg>
              </SquareButton>
            </ListButtons>
          </Section>

          <Section>
            <SectionHead>
              <h3>Align to Face</h3>
              <Collapse name="Align to Face" />
            </SectionHead>
            <EditArea>
              <EditButton>Edit</EditButton>
              <Pointer width="13" height="20" viewBox="0 0 13 20">
                <path d="M1 1v15l3.500-3.500L7 18l3-1.500-2.500-5H12z" fill="#fff" stroke="#222" />
              </Pointer>
            </EditArea>
          </Section>

          <Section>
            <SectionHead>
              <h3>Dynamic Transform</h3>
              <Collapse name="Dynamic Transform" />
            </SectionHead>
            <EditButton>Edit</EditButton>
          </Section>

          <Section $bottom={2}>
            <SectionHead>
              <h3>Preview Settings</h3>
              <Collapse name="Preview Settings" />
            </SectionHead>
            <SettingRow $h={28}>
              <CheckLabel>
                <CheckBox type="checkbox" />
                Isolate
              </CheckLabel>
            </SettingRow>
            <ColorRow label="Fixture color:" color="#1783fb" />
            <SettingRow $h={4} />
            <ColorRow label="Remainder color:" color="#fff" />
            <SettingRow $h={22}>
              <CheckLabel>
                <CheckBox
                  type="checkbox"
                  checked={wireframe}
                  onChange={() => setWireframe(!wireframe)}
                />
                Show wireframe
              </CheckLabel>
            </SettingRow>
          </Section>
        </Sections>
      </PanelBody>

      <BottomTabs>
        <ManagerTab>Toolpaths</ManagerTab>
        <ManagerTab>Solids</ManagerTab>
        <ManagerTab>Planes</ManagerTab>
        <ManagerTab>Levels</ManagerTab>
        <ManagerTab $active>Machine Gr...</ManagerTab>
        <ManagerTab>Recent Fun...</ManagerTab>
      </BottomTabs>
    </SidePanel>
  );
};

const SelectionToolbar = () => (
  <SelectionBar>
    <BarButton $dim $w={24} aria-label="Lock">
      <MaskedIcon><path d="M3 7h10v8H3zM5 7V3h6v4" fill="#888" /></MaskedIcon>
    </BarButton>
    <BarButton $w={84}>
      <MaskedIcon size={14}>
        <path d="M1 2h14v13H1z" strokeDasharray="2 1" />
        <CursorShape x={4} y={1} fill="#666" stroke="#666" />
      </MaskedIcon>
      AutoCursor
    </BarButton>
    <BarButton $w={12} aria-label="Cursor modes"><DropGlyph /></BarButton>
    <BarButton $w={26} aria-label="Fast point">
      <svg width="18" height="16" viewBox="0 0 18 16">
        <path d="M9 1v7M6 4h6M1 9l4 6M5 9l-4 6M7 9l2 3 2-3M9 12v3M13 9h4l-4 6h4" fill="none" stroke="#555" strokeWidth="1.200" />
      </svg>
    </BarButton>
    <BarButton $w={20} aria-label="Settings">
      <MaskedIcon><path d="M3 0v6M0 3h6" /><circle cx="10" cy="10" r="4" strokeWidth="2.500" stroke="#888" /></MaskedIcon>
    </BarButton>
    <BarDivider />
    {["Select", "Face", "Edge", "Body", "Loop"].map((name) => (
      <BarButton key={name} $dim aria-label={name}>
        <MaskedIcon><path d="M5 2v11l3-3 2 4 1-1-1-4h3z" fill="#555" /></MaskedIcon>
      </BarButton>
    ))}
    <BarButton $w={18} aria-label="Back face">
      <MaskedIcon><path d="M7 2l5 3v8l-5 2z" fill="#555" /><path d="M2 3h6v10H2z" fill="#b3aaa2" stroke="none" /></MaskedIcon>
    </BarButton>
    <BarButton $w={24} aria-label="Selection method">
      <MaskedIcon>
        <path d="M1 2h14v13H1z" strokeDasharray="2 2" />
        <CursorShape x={5} y={1} fill="#555" stroke="#555" />
      </MaskedIcon>
    </BarButton>
    <BarButton $w={12} aria-label="Method list"><DropGlyph /></BarButton>
    <BarButton $w={28} aria-label="Window">
      <MaskedIcon><path d="M1 1h14v14H1z" fill="#bcb9b9" strokeDasharray="2 1" /></MaskedIcon>
    </BarButton>
    <BarButton $w={12} aria-label="Window list"><DropGlyph /></BarButton>
    <BarButton $on $w={22} aria-label="Verify" />
    <BarButton $w={22} aria-label="Select last">
      <MaskedIcon><path d="M1 1v8l2-2 2 3 1-1-1-3h3z" fill="#555" /><path d="M8 6h7v9H8zM10 8h3l-2 5" /></MaskedIcon>
    </BarButton>
    <BarButton $w={23} aria-label="Invert">
      <MaskedIcon><path d="M2 8c0-5 6-7 9-4M14 7c0 5-6 8-10 5M1 6v5h4M11 1v6h4" strokeWidth="1.500" /></MaskedIcon>
    </BarButton>
    <BarButton $dim aria-label="Clear">
      <MaskedIcon><path d="M3 1v8l2-2 2 3M8 3l6 9M9 2v8" /></MaskedIcon>
    </BarButton>
  </SelectionBar>
);

const Globe = ({ kind }) => (
  <svg width="16" height="16" viewBox="0 0 16 16">
    {kind < 3 ? (
      <g fill="none" stroke="#d8e6f7">
        <circle cx="8" cy="8" r="6.500" />
        <ellipse cx="8" cy="8" rx="3" ry="6.500" />
        <path d={kind === 2 ? "M8 8v6.500M8 10h6M1.500 8H11" : "M1.500 6h13M1.500 10h13M8 1.500v13"} />
        {kind === 2 && <path d="M2 3h5v10H3z" fill="#335795" stroke="none" />}
      </g>
    ) : (
      <g>
        {kind === 4 && <circle cx="8" cy="8" r="8" fill="#2c7bdc" />}
        <circle cx="8" cy="8" r="6.500" fill="#d9dade" />
        <circle cx="6" cy="5.500" r="3" fill="#fff" />
        {kind === 5 && <path d="M12.600 3.400a6.500 6.500 0 0 1-9.200 9.200z" fill="#7a818e" />}
      </g>
    )}
  </svg>
);

const App = () => {
  return (
    <AppFrame>
      <GlobalStyle />
      <TopBar>
        <QuickAccess>
          <QuickButton aria-label="New"><NewIcon /></QuickButton>
          <QuickButton aria-label="Start page"><BrandIcon /></QuickButton>
          <QuickButton aria-label="Save"><SaveIcon /></QuickButton>
          <QuickButton aria-label="Open"><OpenIcon /></QuickButton>
          <QuickButton $w={10} aria-label="Recent files"><DropGlyph open /></QuickButton>
          <QuickButton aria-label="Print"><PrintIcon /></QuickButton>
          <QuickButton aria-label="Save as"><SaveIcon edit /></QuickButton>
          <QuickButton aria-label="Post"><PostIcon /></QuickButton>
          <QuickDivider />
          <QuickButton aria-label="Undo"><UndoIcon /></QuickButton>
          <QuickButton aria-label="Redo"><UndoIcon flip /></QuickButton>
          <QuickButton $w={16} aria-label="Customize"><OverflowGlyph /></QuickButton>
        </QuickAccess>
        <ContextTitle>Mill</ContextTitle>
        <DocTitle>
          C:\Users\Public\Documents\Shared Mastercam 2024\Add-Ins\SIGNATUREPARTSBROWSER\Signature
          Parts\Aerospace Hinge - 2 Stock Model Verify.mcam* - Masterca...
        </DocTitle>
        <WindowButtons>
          <WindowButton aria-label="Minimize">
            <svg width="8" height="8" viewBox="0 0 8 8"><path d="M1 6h6" stroke="#555" strokeWidth="2" /></svg>
          </WindowButton>
          <WindowButton aria-label="Restore">
            <svg width="10" height="10" viewBox="0 0 10 10">
              <path d="M1 4h5v5H1zM3.500 4V1.500h5v5H6" fill="none" stroke="#555" strokeWidth="1.300" />
            </svg>
          </WindowButton>
          <WindowButton aria-label="Close">
            <svg width="8" height="8" viewBox="0 0 8 8"><path d="M1 1l6 6M7 1L1 7" stroke="#555" strokeWidth="1.500" /></svg>
          </WindowButton>
        </WindowButtons>
      </TopBar>

      <TabStrip>
        <RibbonTab $kind="file">File</RibbonTab>
        {menuTabs.map((tab) => (
          <RibbonTab key={tab}>{tab}</RibbonTab>
        ))}
        <RibbonTab $kind="active">Toolpaths</RibbonTab>
        <TabTools>
          <SelectBox>
            <ModeSelect aria-label="Attributes mode" defaultValue="Standard">
              <option>Standard</option>
            </ModeSelect>
            <DropGlyph />
          </SelectBox>
          <AccountLink href="#account">myMastercam</AccountLink>
          <TabIconButton aria-label="Feedback">
            <svg width="15" height="15" viewBox="0 0 15 15">
              <path d="M1 1.500h13v9h-2v3l-3-3H1zM3 4h9M3 6h9M3 8h9" fill="none" stroke="#5d7897" />
            </svg>
          </TabIconButton>
          <TabIconButton aria-label="Help topics"><HelpIcon size={16} /></TabIconButton>
          <TabIconButton aria-label="Collapse ribbon">
            <svg width="8" height="5" viewBox="0 0 8 5"><path d="M1 4l3-3 3 3" fill="none" stroke="#555" /></svg>
          </TabIconButton>
        </TabTools>
      </TabStrip>

      <Ribbon />

      <Workspace>
        <SetupPanel />
        <ViewColumn>
          <Viewport>
            <MachineModel />
            <SelectionToolbar />
            <QuickMasks>
              {maskIcons.map((icon, i) => (
                <MaskButton key={i} aria-label={`Quick mask ${i + 1}`}>
                  <MaskedIcon>{icon}</MaskedIcon>
                </MaskButton>
              ))}
            </QuickMasks>
            <ViewGizmo />
            <ScaleMark><span>476.297 mm</span></ScaleMark>
          </Viewport>
          <SplitBar />
          <BottomTabs>
            <SheetTab><BookmarkIcon />ISO PART</SheetTab>
            <SheetTab><BookmarkIcon />ISO PART WF</SheetTab>
            <SheetTab $active><BookmarkIcon />ISO STOCK FIXTURE</SheetTab>
            <SheetTab>Temporary Viewsheet</SheetTab>
            <SheetTab aria-label="Add viewsheet">+</SheetTab>
            <SheetArrows>
              <button aria-label="Previous sheet">
                <svg width="6" height="10" viewBox="0 0 6 10"><path d="M5 1v8L1 5z" fill="none" stroke="#888" /></svg>
              </button>
              <button aria-label="Next sheet">
                <svg width="6" height="10" viewBox="0 0 6 10"><path d="M1 1v8l4-4z" fill="none" stroke="#888" /></svg>
              </button>
            </SheetArrows>
          </BottomTabs>
        </ViewColumn>
      </Workspace>

      <StatusBar>
        <StatusCell $w={120}>SECTION VIEW: OFF</StatusCell>
        <StatusCell $w={175}>SELECTED ENTITIES: 0</StatusCell>
        <StatusCell $w={93}><b>X:</b>-147.35945</StatusCell>
        <StatusCell $w={87}><b>Y:</b>-291.01195</StatusCell>
        <StatusCell $w={84}><b>Z:</b>0.00000<DropGlyph color="#6688bd" open /></StatusCell>
        <StatusCell $w={29}>3D</StatusCell>
        <StatusCell $w={87}>CPLANE: Top<DropGlyph color="#6688bd" open /></StatusCell>
        <StatusCell $w={87}>TPLANE: Top<DropGlyph color="#6688bd" open /></StatusCell>
        <StatusCell $w={73}>WCS: Top<DropGlyph color="#6688bd" open /></StatusCell>
        {["Wireframe", "Dimmed", "No hidden", "Shaded", "Outline shaded", "Translucent"].map((name, i) => (
          <StatusButton key={name} aria-label={name}>
            <Globe kind={i} />
          </StatusButton>
        ))}
      </StatusBar>
    </AppFrame>
  );
};

export default App;
